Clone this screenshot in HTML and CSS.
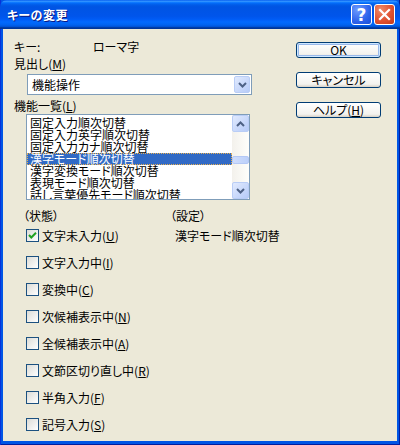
FILE: index.html
```html
<!DOCTYPE html>
<html>
<head>
    <title>キーの変更</title>
    <link rel="stylesheet" href="styles.css">
</head>
<body>
    <div class="window">
        <div class="titlebar">
            <span class="title">キーの変更</span>
            <span class="tbtn help">?</span>
            <span class="tbtn close">
                <svg width="13" height="13" viewBox="0 0 13 13">
                    <path d="M2 2 L11 11 M11 2 L2 11" stroke="#fff" stroke-width="2.2" stroke-linecap="square"/>
                </svg>
            </span>
        </div>

        <div class="client">
            <div class="main">
                <div class="key-row">
                    <span class="key-label">キー:</span>
                    <span>ローマ字</span>
                </div>

                <div class="label">見出し(<u>M</u>)</div>
                <div class="combo">
                    <span class="combo-text">機能操作</span>
                    <span class="drop-btn">
                        <svg width="9" height="6" viewBox="0 0 9 6">
                            <path d="M1 1 L4.5 4.5 L8 1" fill="none" stroke="#4D6185" stroke-width="2"/>
                        </svg>
                    </span>
                </div>

                <div class="label">機能一覧(<u>L</u>)</div>
                <div class="listbox">
                    <div class="items">
                        <div class="item">固定入力順次切替</div>
                        <div class="item">固定入力英字順次切替</div>
                        <div class="item">固定入力カナ順次切替</div>
                        <div class="item selected">漢字モード順次切替</div>
                        <div class="item">漢字変換モード順次切替</div>
                        <div class="item">表現モード順次切替</div>
                        <div class="item">話し言葉優先モード順次切替</div>
                    </div>
                    <div class="scrollbar">
                        <span class="sb-btn">
                            <svg width="9" height="6" viewBox="0 0 9 6">
                                <path d="M1 5 L4.5 1.5 L8 5" fill="none" stroke="#4D6185" stroke-width="2"/>
                            </svg>
                        </span>
                        <div class="track">
                            <span class="thumb"></span>
                        </div>
                        <span class="sb-btn">
                            <svg width="9" height="6" viewBox="0 0 9 6">
                                <path d="M1 1 L4.5 4.5 L8 1" fill="none" stroke="#4D6185" stroke-width="2"/>
                            </svg>
                        </span>
                    </div>
                </div>

                <div class="status">
                    <div class="state-col">
                        <div class="head">（状態）</div>
                        <div class="checks">
                            <label class="check-row">
                                <span class="check">
                                    <svg width="11" height="11" viewBox="0 0 11 11">
                                        <path d="M2 5 L4.3 7.5 L9 2.8" fill="none" stroke="#21A121" stroke-width="2"/>
                                    </svg>
                                </span>
                                文字未入力(<u>U</u>)
                            </label>
                            <label class="check-row"><span class="check"></span>文字入力中(<u>I</u>)</label>
                            <label class="check-row"><span class="check"></span>変換中(<u>C</u>)</label>
                            <label class="check-row"><span class="check"></span>次候補表示中(<u>N</u>)</label>
                            <label class="check-row"><span class="check"></span>全候補表示中(<u>A</u>)</label>
                            <label class="check-row"><span class="check"></span>文節区切り直し中(<u>R</u>)</label>
                            <label class="check-row"><span class="check"></span>半角入力(<u>F</u>)</label>
                            <label class="check-row"><span class="check"></span>記号入力(<u>S</u>)</label>
                        </div>
                    </div>
                    <div class="setting-col">
                        <div class="head">（設定）</div>
                        <div class="setting-value">漢字モード順次切替</div>
                    </div>
                </div>
            </div>

            <div class="actions">
                <span class="btn default">OK</span>
                <span class="btn">キャンセル</span>
                <span class="btn">ヘルプ(<u>H</u>)</span>
            </div>
        </div>
    </div>
</body>
</html>
```

FILE: styles.css
```css
body {
    margin: 0;
    background: #0055E5;
    font-family: "Noto Sans CJK JP", sans-serif;
    font-size: 12px;
    font-feature-settings: "palt";
    color: #000;
}

.window {
    width: 400px;
    height: 445px;
    display: flex;
    flex-direction: column;
    background: #0055E5;
    box-shadow: inset 1px 0 #0831D9, inset -1px 0 #001EA0, inset 0 -1px #001EA0;
}

/* title bar */
.titlebar {
    height: 29px;
    flex-shrink: 0;
    display: flex;
    align-items: center;
    padding: 0 5px 0 7px;
    border-radius: 7px 7px 0 0;
    background: linear-gradient(to bottom, #0058EE 0%, #3593FF 4%, #288EFF 6%, #127DFF 8%, #036FFC 10%, #0262EE 14%, #0057E5 20%, #0054E3 24%, #0055EB 56%, #005BF5 66%, #026AFE 76%, #0062EF 86%, #0052D6 92%, #0040AB 94%, #003092 100%);
}

.title {
    flex: 1;
    color: #fff;
    font-weight: bold;
    font-size: 12px;
    letter-spacing: 0.5px;
    text-shadow: 1px 1px #0A1883;
}

.tbtn {
    width: 21px;
    height: 21px;
    box-sizing: border-box;
    border: 1px solid #fff;
    border-radius: 3px;
    display: flex;
    align-items: center;
    justify-content: center;
    color: #fff;
}

.help {
    margin-right: 2px;
    font-family: "DejaVu Sans", sans-serif;
    font-weight: bold;
    font-size: 17px;
    background: radial-gradient(circle at 30% 25%, #6C9BFF, #2E63EB 60%, #1A4FD8);
}

.close {
    background: radial-gradient(circle at 30% 25%, #F08A68, #E05232 55%, #C43A1A);
}

/* client area */
.client {
    flex: 1;
    margin: 0 3px 4px;
    background: #ECE9D8;
    display: flex;
}

.main {
    flex: 1;
    padding: 12px 0 0 11px;
    display: flex;
    flex-direction: column;
    align-items: flex-start;
}

.key-row {
    line-height: 12px;
    display: flex;
}

.key-label {
    width: 79px;
}

.label {
    margin-top: 5px;
    line-height: 12px;
}

.combo {
    margin: 4px 0 0 13px;
    width: 225px;
    height: 21px;
    box-sizing: border-box;
    border: 1px solid #7F9DB9;
    background: #fff;
    display: flex;
    align-items: center;
}

.combo-text {
    flex: 1;
    padding-left: 4px;
}

.drop-btn {
    width: 16px;
    height: 17px;
    margin-right: 1px;
    box-sizing: border-box;
    border: 1px solid #B9CDF6;
    border-radius: 2px;
    background: linear-gradient(135deg, #E1EAFE, #B6CBF8);
    display: flex;
    align-items: center;
    justify-content: center;
}

.listbox {
    margin: 2px 0 0 12px;
    width: 224px;
    height: 86px;
    box-sizing: border-box;
    border: 1px solid #7F9DB9;
    background: #fff;
    display: flex;
}

.items {
    flex: 1;
    padding-top: 2px;
    overflow: hidden;
}

.item {
    line-height: 12px;
    height: 12px;
    padding-left: 3px;
    white-space: nowrap;
}

.selected {
    background: #316AC5;
    color: #fff;
    outline: 1px dotted #E8B050;
    outline-offset: -1px;
}

.scrollbar {
    width: 17px;
    display: flex;
    flex-direction: column;
    background: linear-gradient(to right, #F3F1EC, #FEFEFB);
}

.sb-btn {
    height: 17px;
    box-sizing: border-box;
    border: 1px solid #B9CDF6;
    border-radius: 2px;
    background: linear-gradient(135deg, #E1EAFE, #B6CBF8);
    display: flex;
    align-items: center;
    justify-content: center;
}

.track {
    flex: 1;
}

.thumb {
    display: block;
    margin-top: 24px;
    height: 8px;
    box-sizing: border-box;
    border: 1px solid #B4C8F6;
    border-radius: 2px;
    background: linear-gradient(to right, #CFDDFC, #BCD0FA);
}

/* state / setting */
.status {
    margin: 10px 0 0 9px;
    display: flex;
}

.state-col {
    width: 147px;
}

.head {
    line-height: 12px;
}

.checks {
    margin: 7px 0 0 3px;
    display: flex;
    flex-direction: column;
    gap: 14px;
}

.check-row {
    display: flex;
    align-items: center;
    height: 13px;
    line-height: 13px;
    white-space: nowrap;
}

.check {
    width: 13px;
    height: 13px;
    margin-right: 3px;
    box-sizing: border-box;
    border: 1px solid #1C5180;
    background: linear-gradient(135deg, #DCDCD7, #FFFFFF);
    display: flex;
    align-items: center;
    justify-content: center;
}

.setting-value {
    margin: 7px 0 0 5px;
    line-height: 13px;
}

/* buttons */
.actions {
    width: 85px;
    margin-right: 16px;
    padding-top: 13px;
    display: flex;
    flex-direction: column;
    gap: 14px;
}

.btn {
    height: 16px;
    box-sizing: border-box;
    border: 1px solid #003C74;
    border-radius: 3px;
    background: linear-gradient(to bottom, #FFFFFF, #F3F2EE 80%, #D6D0C5);
    display: flex;
    align-items: center;
    justify-content: center;
    line-height: 12px;
}

.default {
    box-shadow: inset 0 0 0 1px #CEE7FF, inset 0 0 0 2px #98B8EA;
}
```
